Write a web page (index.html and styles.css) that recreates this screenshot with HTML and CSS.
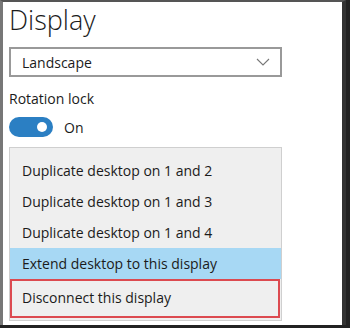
FILE: index.html
```html
<!DOCTYPE html>
<html lang="en">
<head>
    <meta charset="UTF-8">
    <title>Display</title>
    <link rel="stylesheet" href="styles.css">
</head>
<body>

<div class="frame">
    <h1>Display</h1>

    <div class="select">
        <span>Landscape</span>
        <svg class="chevron" width="14" height="8" viewBox="0 0 14 8">
            <path d="M1 1 L7 7 L13 1" fill="none" stroke="#777" stroke-width="1.1"/>
        </svg>
    </div>

    <p class="label">Rotation lock</p>
    <div class="toggle-row">
        <span class="toggle"><span class="knob"></span></span>
        <span>On</span>
    </div>

    <!-- Lista desplegable de proyección -->
    <ul class="menu">
        <li>Duplicate desktop on 1 and 2</li>
        <li>Duplicate desktop on 1 and 3</li>
        <li>Duplicate desktop on 1 and 4</li>
        <li class="selected">Extend desktop to this display</li>
        <li class="marked">Disconnect this display</li>
    </ul>
</div>

</body>
</html>
```

FILE: styles.css
```css
body {
    margin: 0;
    padding: 0;
    background-color: #222;
    font-family: "Open Sans", "Noto Sans", sans-serif;
    color: #1b1b1b;
}
.frame {
    width: 346px;
    height: 325px;
    box-sizing: border-box;
    padding: 0 0 0 6px;
    background-color: white;
    border-top: 2px solid #555;
    border-left: 3px solid #777;
    border-right: 4px solid #333;
}
h1 {
    margin: 0;
    font-size: 27px;
    font-weight: 300;
    line-height: 36px;
    height: 45px;
}
.select {
    width: 273px;
    height: 30px;
    box-sizing: border-box;
    border: 2px solid #999;
    display: flex;
    align-items: center;
    justify-content: space-between;
    padding: 0 10px 0 11px;
    font-size: 14px;
}
.label {
    margin: 12px 0 0;
    font-size: 14px;
    line-height: 20px;
}
.toggle-row {
    display: flex;
    align-items: center;
    gap: 11px;
    margin-top: 8px;
    font-size: 14px;
}
.toggle {
    width: 44px;
    height: 20px;
    border-radius: 10px;
    background-color: #2b7fc3;
    display: flex;
    align-items: center;
    justify-content: flex-end;
    padding-right: 6px;
    box-sizing: border-box;
}
.knob {
    width: 10px;
    height: 10px;
    border-radius: 50%;
    background-color: white;
}
.menu {
    list-style: none;
    margin: 10px 0 0;
    padding: 7px 0 0;
    width: 273px;
    height: 174px;
    box-sizing: border-box;
    background-color: #efefef;
    border: 1px solid #cfcfcf;
    font-size: 14px;
}
.menu li {
    height: 31px;
    line-height: 31px;
    padding-left: 12px;
}
.menu .selected {
    background-color: #a7d8f4;
}
.menu .marked {
    height: 39px;
    line-height: 33px;
    border: 2px solid #dc4a50;
    box-sizing: border-box;
    width: 270px;
    padding-left: 10px;
}
```
